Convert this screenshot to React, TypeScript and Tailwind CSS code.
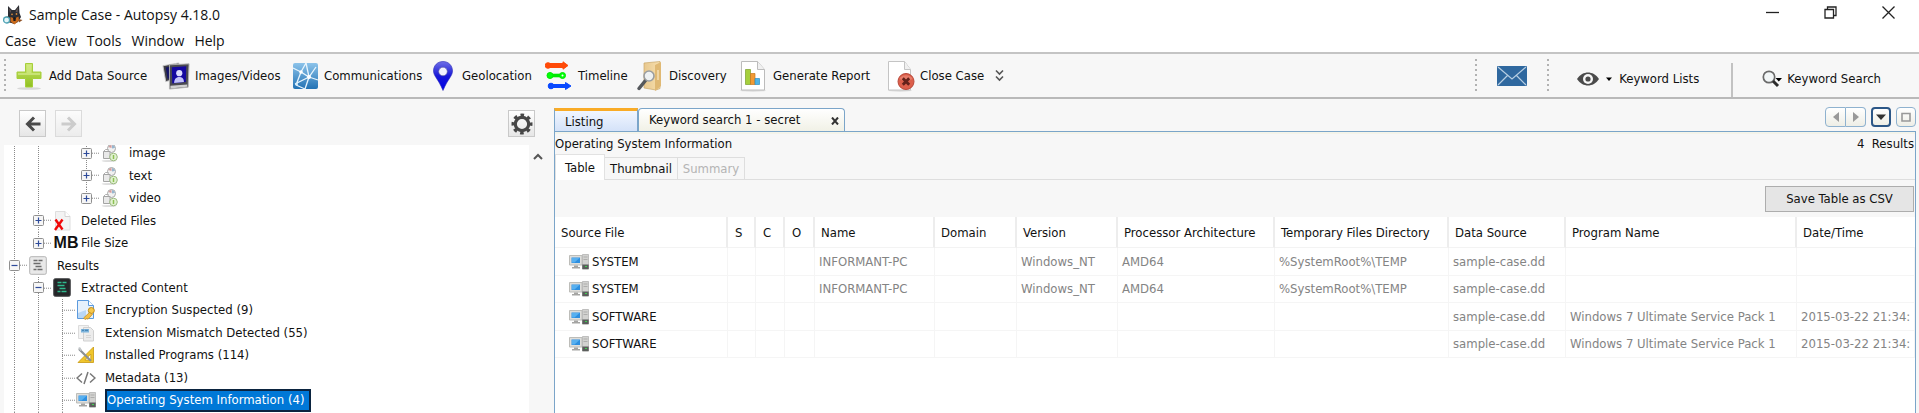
import React, { useState } from "react";

/* ---------- icons ---------- */

const DogIcon = () => (
  <svg width="20" height="20" viewBox="0 0 20 20" aria-hidden="true">
    <path d="M2 12l4-1 3 7-5-1z" fill="#9a5a2c" />
    <path d="M5 1l4 4h3l4-5 .5 8 1.500 4-3 5-4 2-5-2-1-5z" fill="#2b2d33" />
    <path d="M6 3l2 3-1 2zM15 2.500l-2.500 4 2 1z" fill="#6b5a58" />
    <path d="M7.500 12l4 1.500 4-2 .5 4-4.500 4-4-3z" fill="#c8691c" />
    <path d="M10 13l1.500-1 1.500 1-.5 3h-2z" fill="#1c1a1b" />
    <circle cx="9" cy="9.300" r=".9" fill="#d98a3c" />
    <circle cx="13.500" cy="9" r=".9" fill="#d98a3c" />
    <path d="M15.500 14l4 1-3.500 2.500z" fill="#8f5124" />
    <circle cx="3.600" cy="15" r="3" fill="#e3f5f8" stroke="#4fa3b5" strokeWidth="1.300" />
  </svg>
);

const PlusIcon = () => (
  <svg width="28" height="30" viewBox="0 0 28 30" aria-hidden="true">
    <defs>
      <linearGradient id="plus" x1="0" y1="0" x2="0" y2="1">
        <stop offset="0" stopColor="#c9e36b" />
        <stop offset="1" stopColor="#8fc01f" />
      </linearGradient>
    </defs>
    <ellipse cx="13" cy="27.500" rx="12" ry="1.300" fill="#d8d8d8" />
    <path d="M9.500 2.500h7v8.500h8.500v6.500h-8.500v8.500h-7v-8.500h-8.500v-6.500h8.500z" fill="url(#plus)" stroke="#a6cf3a" />
    <path d="M10.500 3.500h5v8.500h8.500v2h-22v-2h8.500z" fill="#d9ee92" opacity=".6" />
  </svg>
);

const ImagesIcon = () => (
  <svg width="30" height="30" viewBox="0 0 30 30" aria-hidden="true">
    <path d="M1 4l17-3 2 16-16 4z" fill="#3c3c44" stroke="#c9c9c9" />
    <path d="M4 6l12-2 1 12-11 2z" fill="#141466" />
    <path d="M8 3l21-1-1 25-20 2z" fill="#4a4a50" stroke="#b5b5b5" />
    <path d="M10.500 5.500l15.500-1-.5 17-14.500 1.500z" fill="#1408a0" />
    <circle cx="18.500" cy="12" r="3.300" fill="#dcdcff" />
    <path d="M13 22.500c0-5 3-6.500 5.500-6.500s5 1 5 5.500z" fill="#c3c3f8" />
    <path d="M9 25.500l18-1.500v2.500l-18 2z" fill="#d0d0d0" />
  </svg>
);

const CommIcon = () => (
  <svg width="28" height="28" viewBox="0 0 28 28" aria-hidden="true">
    <defs>
      <linearGradient id="comm" x1="0" y1="0" x2="0" y2="1">
        <stop offset="0" stopColor="#8cc3ea" />
        <stop offset="1" stopColor="#2272b4" />
      </linearGradient>
    </defs>
    <rect x="2" y="1" width="25" height="26" rx="2" fill="url(#comm)" />
    <path d="M2 6l8 4 5-9M10 10l-5 13M10 10l8 5 7-10M18 15l9 3M18 15l-4 12M18 15L4 22M5 23l9 4M15 1l3 14" fill="none" stroke="#e8f5fd" strokeWidth="1.300" />
    <circle cx="10" cy="10" r="1.800" fill="#fff" />
    <circle cx="18" cy="15" r="2" fill="#fff" />
    <circle cx="5.500" cy="22" r="1.500" fill="#d5ecfa" />
  </svg>
);

const PinIcon = () => (
  <svg width="28" height="30" viewBox="0 0 28 30" aria-hidden="true">
    <defs>
      <linearGradient id="pin" x1="0" y1="0" x2="0" y2="1">
        <stop offset="0" stopColor="#6f6fe6" />
        <stop offset=".5" stopColor="#1818d8" />
        <stop offset="1" stopColor="#0000e8" />
      </linearGradient>
    </defs>
    <path d="M14 0.500c5.500 0 9.500 4 9.500 9.500 0 5-4.500 7.500-9.500 19.500-5-12-9.500-14.500-9.500-19.500 0-5.500 4-9.500 9.500-9.500z" fill="url(#pin)" stroke="#2a2ab8" strokeWidth=".6" />
    <circle cx="14" cy="10.500" r="4.300" fill="#f4f4ff" stroke="#5a5a9a" strokeWidth=".6" />
  </svg>
);

const TimelineIcon = () => (
  <svg width="28" height="30" viewBox="0 0 28 30" aria-hidden="true">
    <g stroke="#ff4a08" fill="#ff4a08">
      <path d="M3 4.500h17" strokeWidth="5" />
      <circle cx="3" cy="4.500" r="2.800" />
      <path d="M18 .8l5 3.700-5 3.700z" />
    </g>
    <g stroke="#00e800" fill="#00ff08">
      <path d="M4 14.500h13" strokeWidth="3.600" />
      <circle cx="5" cy="14.500" r="3" />
      <circle cx="17.500" cy="14.500" r="3" />
      <circle cx="17.500" cy="14.500" r="1" fill="#fff" stroke="none" />
    </g>
    <g stroke="#0848ff" fill="#0848ff">
      <path d="M6 25h15" strokeWidth="4" />
      <circle cx="6" cy="25" r="2.800" />
      <path d="M20.500 21.500l5.500 3.500-5.500 3.500z" />
    </g>
  </svg>
);

const DiscoveryIcon = () => (
  <svg width="28" height="30" viewBox="0 0 28 30" aria-hidden="true">
    <defs>
      <linearGradient id="folder" x1="0" y1="0" x2="1" y2="0">
        <stop offset="0" stopColor="#e8c88e" />
        <stop offset="1" stopColor="#f7dfae" />
      </linearGradient>
    </defs>
    <path d="M8 2l16-1.500v27l-4 1.500-12-2z" fill="url(#folder)" stroke="#caa869" strokeWidth=".7" />
    <path d="M19 4l6-3v24l-6 5z" fill="#e0b974" />
    <path d="M22 9v10" stroke="#fff3d8" strokeWidth="1" />
    <path d="M9.500 19.500l-6.500 8" stroke="#55585c" strokeWidth="3.500" strokeLinecap="round" />
    <circle cx="13" cy="15" r="5" fill="#eef1f2" stroke="#9a9da0" strokeWidth="1.600" />
  </svg>
);

const ReportIcon = () => (
  <svg width="28" height="32" viewBox="0 0 28 32" aria-hidden="true">
    <ellipse cx="13" cy="30.500" rx="13" ry="1.200" fill="#dcdcdc" />
    <path d="M1.500 1.500h16l7 8v20.500h-23z" fill="#fff" stroke="#bcbcbc" />
    <path d="M17.500 1.500v8h7" fill="#f0f0f0" stroke="#bcbcbc" />
    <path d="M5.500 9.500h5v15h-5z" fill="#a5cf3c" stroke="#7aa028" strokeWidth=".7" />
    <path d="M10.500 13.500h4.500v11h-4.500z" fill="#f19a34" stroke="#c7761d" strokeWidth=".7" />
    <path d="M15 18.500h4.500v6h-4.500z" fill="#4fb4e6" stroke="#2f8fc0" strokeWidth=".7" />
  </svg>
);

const CloseCaseIcon = () => (
  <svg width="28" height="32" viewBox="0 0 28 32" aria-hidden="true">
    <ellipse cx="13" cy="30.500" rx="12" ry="1.200" fill="#dcdcdc" />
    <path d="M1.500 1.500h16l6 8v20.500h-22z" fill="#fff" stroke="#c4c4c4" />
    <path d="M17.500 1.500v8h6" fill="#f0f0f0" stroke="#c4c4c4" />
    <circle cx="19" cy="21.500" r="8" fill="#dc5f4b" stroke="#b8483a" />
    <path d="M12.500 19a7 6 0 0 1 13 0 9 5 0 0 1-13 0" fill="#ee9180" opacity=".6" />
    <path d="M15.800 18.300l6.400 6.400M22.200 18.300l-6.400 6.400" stroke="#63211a" strokeWidth="2.800" />
  </svg>
);

const PcIcon = () => (
  <svg width="20" height="16" viewBox="0 0 20 16" aria-hidden="true">
    <path d="M.5 1.500h12.500v9.500h-12.500z" fill="#dededb" stroke="#bdbdb9" />
    <path d="M2.500 3.500h8.500v5.500h-8.500z" fill="#2e8fe0" />
    <path d="M3 4h7.500l-5 4.500h-2.500z" fill="#57b0f0" />
    <path d="M5 11.500h4v1.500h2v1.500h-8v-1.500h2z" fill="#a5a5a3" />
    <path d="M13.500.5h6v14.500h-6z" fill="#d2d2d0" stroke="#b4b4b2" strokeWidth=".8" />
    <path d="M14.500 3h4M14.500 5.500h4" stroke="#a5a5a3" strokeWidth=".8" />
    <path d="M13.300 10.500h6.400v4.700h-6.400z" fill="#5b5e5c" />
    <path d="M16 12h2v1h-2z" fill="#3fd050" />
  </svg>
);

const MimeIcon = () => (
  <svg width="18" height="18" viewBox="0 0 18 18" aria-hidden="true">
    <ellipse cx="8" cy="17" rx="7.500" ry=".9" fill="#dedede" />
    <circle cx="10.500" cy="4.500" r="4" fill="#f1f1f1" stroke="#a9a9a9" />
    <path d="M7.500 3a4 4 0 0 1 3-2v3z" fill="#d59a9a" />
    <path d="M11 1a4 4 0 0 1 3 3l-3 .5z" fill="#96b6cf" />
    <path d="M2.500 7.500h6.500v7h-6.500z" fill="#e9e9e9" stroke="#a4a4a4" />
    <path d="M2.500 7.500l2-2h3" fill="none" stroke="#b0b0b0" />
    <circle cx="12.500" cy="13" r="3.800" fill="#e2f2d2" stroke="#9dbb80" />
    <path d="M12.500 11v4" stroke="#8cc152" strokeWidth="1.500" />
  </svg>
);

const DeletedIcon = () => (
  <svg width="18" height="20" viewBox="0 0 18 20" aria-hidden="true">
    <path d="M2.500.5h9.500l5 5v13.500h-14.500z" fill="#f3f3f3" stroke="#dedede" />
    <path d="M12 .5v5h5" fill="#fff" stroke="#d4d4d4" />
    <path d="M2.500 8.500l7 10M9.500 8.500l-7.500 10.500" stroke="#f00808" strokeWidth="2.400" />
  </svg>
);

const ResultsIcon = ({ dark }: { dark?: boolean }) => (
  <svg width="18" height="19" viewBox="0 0 18 19" aria-hidden="true">
    <rect x=".7" y=".7" width="16.600" height="17.600" rx="1.500" fill={dark ? "#242628" : "#e9e9e9"} stroke={dark ? "#4a4c4e" : "#b4b4b4"} />
    <path d="M4.500 4.500h4M9.500 4.500h4M4.500 7.500h7M6.500 10.500h6M4.500 13.500h3M8.500 13.500h5" stroke={dark ? "#2fb98c" : "#6c6c6c"} strokeWidth="1.600" />
  </svg>
);

const EncryptionIcon = () => (
  <svg width="20" height="20" viewBox="0 0 20 20" aria-hidden="true">
    <path d="M1.500.5h11l5 5v13h-16z" fill="#e6f1fc" stroke="#5b9ade" />
    <path d="M12.500.5v5h5" fill="#fff" stroke="#5b9ade" />
    <path d="M2 13l8-3v8h-8z" fill="#b9d7f5" />
    <circle cx="15.300" cy="10.500" r="3" fill="#f5c84c" stroke="#c08a1c" />
    <path d="M13.500 12.500l-6 5.500 1.500 1.500 2-1 1 .8 4.500-5z" fill="#f3bf45" stroke="#c08a1c" strokeWidth=".7" />
  </svg>
);

const MismatchIcon = () => (
  <svg width="18" height="18" viewBox="0 0 18 18" aria-hidden="true">
    <path d="M1.500 1.500h10v13h-10z" fill="#f2f2f2" stroke="#dcdcdc" />
    <path d="M6.500 3.500h7l3 3v10.500h-10z" fill="#ececec" stroke="#d0d0d0" />
    <path d="M4 5h8v3.500h-8z" fill="#7db4dc" />
    <path d="M5 6.300h2M8 6.300h3" stroke="#3d7eb0" />
    <path d="M9 11.500h5M9 13.500h5" stroke="#d6d6d6" />
  </svg>
);

const ProgramsIcon = () => (
  <svg width="18" height="18" viewBox="0 0 18 18" aria-hidden="true">
    <path fillRule="evenodd" d="M16.500 1v15.500h-15.500zM13.800 8v6h-6z" fill="#f0c62c" stroke="#c8980f" strokeWidth=".8" />
    <path d="M2 3l12 12" stroke="#8b9095" strokeWidth="2.200" />
    <path d="M1 2l2-1 2 3-1.500 1z" fill="#c3c7ca" />
  </svg>
);

const MetadataIcon = () => (
  <svg width="20" height="14" viewBox="0 0 20 14" fill="none" stroke="#777" strokeWidth="1.500" aria-hidden="true">
    <path d="M6 2.500l-5 4.500 5 4.500M14 2.500l5 4.500-5 4.500M12 1l-4 12" />
  </svg>
);

const Grip = () => (
  <svg width="2" height="34" viewBox="0 0 2 34" aria-hidden="true">
    <path d="M1 0v34" stroke="#b2b2b2" strokeWidth="2" strokeDasharray="2 3" />
  </svg>
);

/* ---------- toolbar ---------- */

const TOOLS = [
  { label: "Add Data Source", icon: <PlusIcon />, width: "w-[146px]" },
  { label: "Images/Videos", icon: <ImagesIcon />, width: "w-[129px]" },
  { label: "Communications", icon: <CommIcon />, width: "w-[138px]" },
  { label: "Geolocation", icon: <PinIcon />, width: "w-[116px]" },
  { label: "Timeline", icon: <TimelineIcon />, width: "w-[91px]" },
  { label: "Discovery", icon: <DiscoveryIcon />, width: "w-[104px]" },
  { label: "Generate Report", icon: <ReportIcon />, width: "w-[147px]" },
  { label: "Close Case", icon: <CloseCaseIcon />, width: "w-[104px]" },
];

const Toolbar = () => (
  <div className="flex h-[47px] items-center border-y-2 border-t-[#c4c4c4] border-b-[#b9b9b9] bg-[#f7f7f7] pl-1">
    <Grip />
    <div className="flex items-center pl-[10px]">
      {TOOLS.map((t) => (
        <button key={t.label} type="button" className={`flex items-center gap-[5px] whitespace-nowrap ${t.width}`}>
          <span className="flex w-7 shrink-0 justify-center">{t.icon}</span>
          {t.label}
        </button>
      ))}
      <button type="button" aria-label="More tools" className="pl-1">
        <svg width="9" height="13" viewBox="0 0 9 13" fill="none" stroke="#555" strokeWidth="1.600">
          <path d="M1 1.500l3.500 3.500 3.500-3.500M1 7.500l3.500 3.500 3.500-3.500" />
        </svg>
      </button>
    </div>
    <div className="ml-auto flex items-center self-stretch">
      <Grip />
      <button type="button" aria-label="Messages" className="px-5">
        <svg width="30" height="20" viewBox="0 0 30 20">
          <rect width="30" height="20" rx="1" fill="#2f689f" />
          <path d="M1 1l14 12L29 1M1 19l9.500-9.500M29 19l-9.500-9.500" fill="none" stroke="#b7cee2" strokeWidth="1.200" />
        </svg>
      </button>
      <Grip />
      <button type="button" className="flex items-center gap-[7px] pt-[6px] pl-7 whitespace-nowrap">
        <svg width="22" height="14" viewBox="0 0 22 14">
          <path d="M0 7c3-4.500 7-6.500 11-6.500s8 2 11 6.500c-3 4.500-7 6.500-11 6.500s-8-2-11-6.500z" fill="#4b4b4b" />
          <circle cx="11" cy="7" r="5" fill="#f7f7f7" />
          <circle cx="11" cy="7" r="2.600" fill="#4b4b4b" />
        </svg>
        <svg width="6" height="4" viewBox="0 0 6 4"><path d="M0 .5h6l-3 3.500z" /></svg>
        Keyword Lists
      </button>
      <span className="ml-8 h-[34px] self-end border-l-2 border-[#c2c2c2]" />
      <button type="button" className="flex items-center gap-[5px] pt-[6px] pr-[38px] pl-[29px] whitespace-nowrap">
        <svg width="20" height="18" viewBox="0 0 20 18">
          <circle cx="7" cy="7" r="5.700" fill="#f2f6f7" stroke="#6a6a6a" strokeWidth="1.700" />
          <path d="M11 11l5 5" stroke="#2c2c2c" strokeWidth="3" />
          <path d="M13.500 8h6.500l-3.200 3.500z" />
        </svg>
        Keyword Search
      </button>
    </div>
  </div>
);

/* ---------- tree ---------- */

type Node = {
  label: string;
  level: number;
  icon: React.ReactNode;
  guides: number[];
  toggle?: "+" | "-";
  last?: boolean;
  selected?: boolean;
};

const NODES: Node[] = [
  { label: "image", level: 3, icon: <MimeIcon />, guides: [0, 1], toggle: "+" },
  { label: "text", level: 3, icon: <MimeIcon />, guides: [0, 1], toggle: "+" },
  { label: "video", level: 3, icon: <MimeIcon />, guides: [0, 1], toggle: "+", last: true },
  { label: "Deleted Files", level: 1, icon: <DeletedIcon />, guides: [0], toggle: "+" },
  { label: "File Size", level: 1, icon: <b className="pl-2 font-['Liberation_Sans'] text-base">MB</b>, guides: [0], toggle: "+", last: true },
  { label: "Results", level: 0, icon: <ResultsIcon />, guides: [], toggle: "-" },
  { label: "Extracted Content", level: 1, icon: <ResultsIcon dark />, guides: [0], toggle: "-" },
  { label: "Encryption Suspected (9)", level: 2, icon: <EncryptionIcon />, guides: [0, 1] },
  { label: "Extension Mismatch Detected (55)", level: 2, icon: <MismatchIcon />, guides: [0, 1] },
  { label: "Installed Programs (114)", level: 2, icon: <ProgramsIcon />, guides: [0, 1] },
  { label: "Metadata (13)", level: 2, icon: <MetadataIcon />, guides: [0, 1] },
  { label: "Operating System Information (4)", level: 2, icon: <PcIcon />, guides: [0, 1], selected: true },
  { label: "", level: 2, icon: <PcIcon />, guides: [0, 1] },
];

const DOTS = { stroke: "#8a8a8a", strokeDasharray: "1 1" };

const TreeRow = ({ node }: { node: Node }) => (
  <li className="flex items-center">
    {Array.from({ length: node.level }, (_, i) => (
      <svg key={i} className="h-full w-6 shrink-0" aria-hidden="true">
        {node.guides.includes(i) && <line x1="12.500" x2="12.500" y1="0" y2="100%" {...DOTS} />}
      </svg>
    ))}
    <span className="relative grid h-full w-6 shrink-0 place-items-center">
      <svg className="absolute inset-0 h-full w-full overflow-visible" aria-hidden="true">
        <line x1="12.500" x2="12.500" y1="0" y2={node.last ? "50%" : "100%"} {...DOTS} />
        <line x1="12" x2="26" y1="50%" y2="50%" {...DOTS} />
      </svg>
      {node.toggle && (
        <button type="button" aria-label={`Toggle ${node.label}`} className="relative">
          <svg width="11" height="11" viewBox="0 0 11 11">
            <rect x=".5" y=".5" width="10" height="10" rx="1" fill="#f6f6f6" stroke="#8f8f8f" />
            <path d={node.toggle === "+" ? "M2.500 5.500h6M5.500 2.500v6" : "M2.500 5.500h6"} stroke="#2d4a9a" strokeWidth="1.200" />
          </svg>
        </button>
      )}
    </span>
    <span className="relative flex w-6 shrink-0 justify-center">{node.icon}</span>
    {node.label && (
      <span
        className={
          node.selected
            ? "ml-[7px] flex h-full items-center border-2 border-[#0b2440] bg-[#0078d7] pr-[5px] text-white"
            : "ml-[7px]"
        }
      >
        {node.label}
      </span>
    )}
  </li>
);

const navBtn = "grid size-[27px] place-items-center border border-[#c9c9c9] bg-linear-to-b from-white to-[#e6e6e6]";

const Explorer = () => (
  <aside className="flex w-[554px] shrink-0 flex-col pl-1">
    <div className="flex items-center gap-[9px] pt-[11px] pr-[19px] pb-2 pl-[15px]">
      <button type="button" aria-label="Back" className={navBtn}>
        <svg width="16" height="16" viewBox="0 0 16 16" fill="none" stroke="#4a4a4a" strokeWidth="3"><path d="M15.500 8h-13M9 1.500l-6.500 6.500 6.500 6.500" /></svg>
      </button>
      <button type="button" aria-label="Forward" className={`${navBtn} opacity-60`}>
        <svg width="16" height="16" viewBox="0 0 16 16" fill="none" stroke="#b0b0b0" strokeWidth="3"><path d="M.5 8h13M7 1.500l6.500 6.500-6.500 6.500" /></svg>
      </button>
      <button type="button" aria-label="Options" className={`${navBtn} ml-auto`}>
        <svg width="22" height="22" viewBox="0 0 22 22" fill="none" stroke="#474747">
          <circle cx="11" cy="11" r="6.700" strokeWidth="3.200" />
          <circle cx="11" cy="11" r="9" strokeWidth="3" strokeDasharray="3.600 3.468" strokeDashoffset="1.800" />
        </svg>
      </button>
    </div>
    <div className="flex h-[268px]">
      <div className="grow overflow-hidden bg-white">
        <ul className="-mt-[3px] -ml-0.5 grid h-[292px] auto-rows-fr whitespace-nowrap">
          {NODES.map((n, i) => <TreeRow key={i} node={n} />)}
        </ul>
      </div>
      <button type="button" aria-label="Scroll up" className="flex w-[25px] pt-2 pl-1">
        <svg width="10" height="7" viewBox="0 0 10 7" fill="none" stroke="#555" strokeWidth="2"><path d="M1 6l4-4 4 4" /></svg>
      </button>
    </div>
  </aside>
);

/* ---------- results ---------- */

const COLUMNS = [
  { name: "Source File", width: "w-[173px]" },
  { name: "S", width: "w-7" },
  { name: "C", width: "w-[29px]" },
  { name: "O", width: "w-[30px]" },
  { name: "Name", width: "w-[120px]" },
  { name: "Domain", width: "w-[82px]" },
  { name: "Version", width: "w-[101px]" },
  { name: "Processor Architecture", width: "w-[157px]" },
  { name: "Temporary Files Directory", width: "w-[174px]" },
  { name: "Data Source", width: "w-[117px]" },
  { name: "Program Name", width: "w-[231px]" },
  { name: "Date/Time", width: "" },
];

const sys = ["", "", "", "INFORMANT-PC", "", "Windows_NT", "AMD64", "%SystemRoot%\\TEMP", "sample-case.dd", "", ""];
const soft = ["", "", "", "", "", "", "", "", "sample-case.dd", "Windows 7 Ultimate Service Pack 1", "2015-03-22 21:34:"];
const ROWS = [
  { file: "SYSTEM", cells: sys },
  { file: "SYSTEM", cells: sys },
  { file: "SOFTWARE", cells: soft },
  { file: "SOFTWARE", cells: soft },
];

const winBtn = "grid h-5 place-items-center border border-[#8fb2cf] bg-linear-to-b from-white to-[#eeeee6]";

const Results = () => {
  const [tab, setTab] = useState("Table");
  return (
    <main className="flex min-w-0 grow flex-col pt-2 pr-[3px]">
      <div className="flex items-end">
        <button type="button" className="-mb-px h-6 w-[84px] border-t-[3px] border-r border-l border-t-[#f9ab26] border-r-[#7ba5c9] border-l-[#7ba5c9] bg-linear-to-b from-[#f1f6ff] to-[#d3e1f8] pl-[10px] text-left">
          Listing
        </button>
        <div className="flex h-[23px] w-[207px] items-center justify-between rounded-t border border-b-0 border-[#7ba5c9] bg-linear-to-b from-white to-[#f1f1e6] pr-[5px] pl-[10px]">
          <button type="button">Keyword search 1 - secret</button>
          <button type="button" aria-label="Close tab" className="pt-0.5">
            <svg width="8" height="8" viewBox="0 0 8 8" stroke="#333" strokeWidth="2"><path d="M1 .5l6 7M7 .5l-6 7" /></svg>
          </button>
        </div>
        <div className="mb-1 ml-auto flex items-center gap-[5px]">
          <div className="flex">
            <button type="button" aria-label="Previous tab" className={`${winBtn} w-[21px] rounded-l`}>
              <svg width="6" height="10" viewBox="0 0 6 10"><path d="M6 0v10l-6-5z" fill="#999" /></svg>
            </button>
            <button type="button" aria-label="Next tab" className={`${winBtn} w-5 rounded-r border-l-0`}>
              <svg width="6" height="10" viewBox="0 0 6 10"><path d="M0 0v10l6-5z" fill="#999" /></svg>
            </button>
          </div>
          <button type="button" aria-label="Tab list" className="grid h-5 w-5 place-items-center rounded border-2 border-[#2c5787] bg-linear-to-b from-white to-[#eeeee6]">
            <svg width="10" height="6" viewBox="0 0 10 6"><path d="M0 .5h10l-5 5.500z" fill="#333" /></svg>
          </button>
          <button type="button" aria-label="Maximise" className={`${winBtn} w-5 rounded`}>
            <svg width="10" height="10" viewBox="0 0 10 10"><path d="M1 1.500h8v7.500h-8z" fill="none" stroke="#999" strokeWidth="1.600" /></svg>
          </button>
        </div>
      </div>
      <section className="flex grow flex-col border-x border-t border-[#7ba5c9]">
        <div className="flex h-[22px] items-center justify-between border-t-2 border-[#f4f4ea]">
          <h1>Operating System Information</h1>
          <p className="pr-px whitespace-pre">4  Results</p>
        </div>
        <div className="flex items-end border-b border-[#dedede]">
          <button type="button" onClick={() => setTab("Table")} aria-pressed={tab === "Table"} className="-mb-px h-[26px] w-[50px] border border-b-0 border-[#e2e2e2] bg-white">
            Table
          </button>
          <button type="button" onClick={() => setTab("Thumbnail")} aria-pressed={tab === "Thumbnail"} className="h-[22px] w-[73px] border-t border-r border-[#dedede]">
            Thumbnail
          </button>
          <button type="button" disabled className="h-[22px] w-[67px] border-t border-r border-[#dedede] text-[#b4b4b4]">
            Summary
          </button>
        </div>
        <div className="flex justify-end pt-[6px] pr-px pb-[5px]">
          <button type="button" className="h-[26px] w-[149px] border border-[#adadad] bg-[#e5e5e5]">
            Save Table as CSV
          </button>
        </div>
        <div className="grow bg-white">
          <table className="w-full table-fixed border-separate border-spacing-0 text-left whitespace-nowrap">
            <thead>
              <tr className="h-[31px]">
                {COLUMNS.map((c, i) => (
                  <th key={c.name} className={`${c.width} border-b border-b-[#f3f3f3] p-0 pt-0.5 font-normal ${i < 11 ? "border-r-2 border-r-[#ededed]" : ""} ${i > 0 && i < 4 ? "pl-[7px]" : "pl-[6px]"}`}>
                    {c.name}
                  </th>
                ))}
              </tr>
            </thead>
            <tbody>
              {ROWS.map((r, i) => (
                <tr key={i} className="h-7 text-[#848484] even:h-[27px]">
                  <td className="border-r border-b border-[#f5f5f5] p-0 text-[#111]">
                    <span className="flex items-center gap-[3px] pl-[14px]"><PcIcon />{r.file}</span>
                  </td>
                  {r.cells.map((c, j) => (
                    <td key={j} className="overflow-hidden border-r border-b border-[#f5f5f5] p-0 pl-1">{c}</td>
                  ))}
                </tr>
              ))}
            </tbody>
          </table>
        </div>
      </section>
    </main>
  );
};

/* ---------- window ---------- */

export default function App() {
  return (
    <div className="flex min-h-screen flex-col overflow-hidden bg-[#f7f7f7] font-['DejaVu_Sans_Condensed','DejaVu_Sans',sans-serif] text-[13px] leading-[18px] text-[#111]">
      <header className="bg-white font-['Open_Sans','Noto_Sans',sans-serif] text-sm leading-5">
        <div className="flex h-[29px] items-center gap-[6px] pl-[3px]">
          <DogIcon />
          <span>Sample Case - Autopsy 4.18.0</span>
          <div className="ml-auto flex items-center gap-[45px] pr-6 pb-1">
            <button type="button" aria-label="Minimise"><svg width="13" height="13" viewBox="0 0 13 13"><path d="M0 6.500h13" stroke="#222" strokeWidth="1.300" /></svg></button>
            <button type="button" aria-label="Restore"><svg width="13" height="13" viewBox="0 0 13 13" fill="none" stroke="#222" strokeWidth="1.300"><path d="M1 3.500h8.500v8.500h-8.500zM3.500 3.500v-2.500h8.500v8.500h-2.500" /></svg></button>
            <button type="button" aria-label="Close"><svg width="13" height="13" viewBox="0 0 13 13" stroke="#222" strokeWidth="1.300"><path d="M.5.500l12 12M12.500.500l-12 12" /></svg></button>
          </div>
        </div>
        <nav className="flex h-[23px] items-center gap-[10px] pl-[5px]">
          {["Case", "View", "Tools", "Window", "Help"].map((m) => (
            <button key={m} type="button">{m}</button>
          ))}
        </nav>
      </header>
      <Toolbar />
      <div className="flex grow">
        <Explorer />
        <Results />
      </div>
    </div>
  );
}
